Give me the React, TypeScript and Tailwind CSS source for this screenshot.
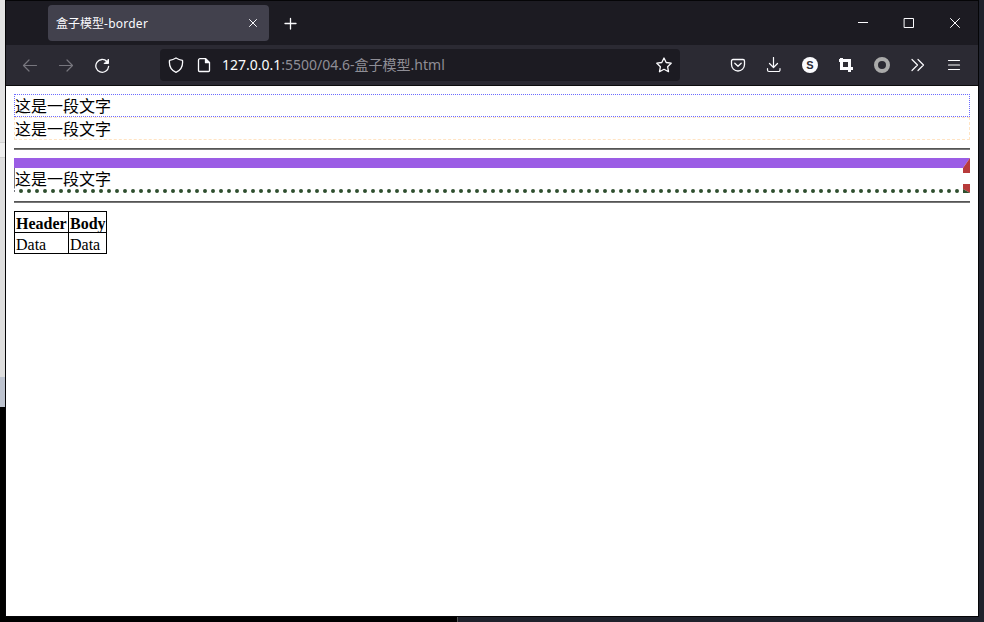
import React from "react";

const ui = "font-['Noto_Sans','Noto_Sans_CJK_SC',sans-serif]";

function Ico({ children, w = 16, c = "#fbfbfe", sw = 1.2 }: { children: React.ReactNode; w?: number; c?: string; sw?: number }) {
  return (
    <svg width={w} height={w} viewBox={`0 0 ${w} ${w}`} fill="none" stroke={c} strokeWidth={sw} strokeLinecap="round" strokeLinejoin="round" className="block shrink-0">
      {children}
    </svg>
  );
}

function TitleBar() {
  return (
    <div className="flex h-11 bg-[#1c1b22]">
      <div className="ml-[42px] mt-1 flex h-9 w-[221px] items-center rounded bg-[#42414d] pl-2 pr-2 text-[12px] text-[#fbfbfe]">
        <span className="flex-1 whitespace-nowrap pt-px">盒子模型<span className="tracking-[0.25px]">-border</span></span>
        <Ico sw={1}><path d="M4.500 4.500l7 7M11.500 4.500l-7 7" /></Ico>
      </div>
      <div className="ml-[14px] mt-[15px]"><Ico sw={1.3}><path d="M7.500 2.500v10.500M2 7.500h11" /></Ico></div>
      <div className="ml-auto mr-[15px] mt-[14px] flex gap-[30px]">
        <Ico sw={1}><path d="M3 7.500h10" strokeLinecap="butt" /></Ico>
        <Ico sw={1}><path d="M3.500 3.500h9v9h-9z" /></Ico>
        <Ico sw={1}><path d="M3.500 3.500l9 9M12.500 3.500l-9 9" /></Ico>
      </div>
    </div>
  );
}

function Toolbar() {
  return (
    <div className="flex h-10 items-center bg-[#2b2a33]">
      <div className="ml-4 flex gap-5">
        <Ico c="#77767e"><path d="M14.500 8.500H1.500M7 3L1.500 8.500L7 14" /></Ico>
        <Ico c="#77767e"><path d="M1.500 8.500h13M9 3l5.500 5.500L9 14" /></Ico>
        <Ico sw={1.3}><path d="M13 4.600A6.400 6.400 0 1 0 14.600 9.500" /><path d="M14.500 2.500v4H10.500z" fill="#fbfbfe" strokeWidth="1" /></Ico>
      </div>
      <div className="ml-[50px] flex h-8 w-[520px] items-center rounded bg-[#1c1b22] px-2">
        <Ico sw={1.3}><path d="M8 1C6 2.300 4 3 1.500 3.300C1 8 2.500 13 8 15.300C13.500 13 15 8 14.500 3.300C12 3 10 2.300 8 1z" /></Ico>
        <div className="ml-3"><Ico sw={1.3}><path d="M9.500 1.700h-5.500a1.500 1.500 0 0 0-1.500 1.500v10.300a1 1 0 0 0 1 1h9a1 1 0 0 0 1-1V5.700z" /><path d="M9.500 1.700v4h4z" fill="#fbfbfe" /></Ico></div>
        <div className="ml-[10px] flex-1 whitespace-nowrap pb-0.5 text-[14px] text-[#8f8e96]"><span className="text-[#fbfbfe]">127.0.0.1</span>:5500/04.6-盒子模型.html</div>
        <Ico sw={1.3}><path d="M8 1l2.200 4.500l5 .7l-3.600 3.500l.9 5L8 12.300l-4.500 2.400l.9-5L.8 6.200l5-.7z" /></Ico>
      </div>
      <div className="ml-auto mr-4 flex gap-5">
        <Ico sw={1.3}><path d="M3 2.500h10a1.500 1.500 0 0 1 1.500 1.500v3.500a6.500 6.500 0 0 1-13 0V4A1.500 1.500 0 0 1 3 2.500zM4.800 6.300L8 9.300l3.200-3" /></Ico>
        <Ico sw={1.2}><path d="M7.500 .5v10M3.500 6.500L7.500 10.500L11.500 6.500M1.500 11.500v1.500a1.500 1.500 0 0 0 1.500 1.500h9.500a1.500 1.500 0 0 0 1.500-1.500v-1.500" /></Ico>
        <div className="flex size-4 items-center justify-center rounded-full bg-[#fbfbfe] font-['Liberation_Sans',sans-serif] text-[11px] font-bold leading-none text-[#2b2a33]">S</div>
        <Ico sw={3}><path d="M3.500 1v10.500h11.500M1 3.500h10.500v11.500" strokeLinecap="butt" strokeLinejoin="miter" /></Ico>
        <div className="size-4 rounded-full border-[4px] border-[#aaa] bg-[#2b2a33]" />
        <Ico sw={1.2}><path d="M2 2.500l5.500 5.500l-5.500 5.500M8 2.500l5.500 5.500l-5.500 5.500" /></Ico>
        <Ico sw={1.2}><path d="M2.500 3.500h11M2.500 8h11M2.500 12.500h11" /></Ico>
      </div>
    </div>
  );
}

function MixedBorderBox() {
  return (
    <div className="relative mt-2 h-9 pl-px pt-[11px] leading-[21px]">
      <svg width="956" height="36" viewBox="0 0 956 36" className="absolute inset-0 block">
        <path d="M0.500 1v29.500M0.500 32v2" stroke="#77777f" />
        <path d="M0 0H956L949 10H0z" fill="#9b5de5" />
        <path d="M956 0V15H949V10z" fill="#b83b3b" />
        <path d="M949 26h7v9l-7-4z" fill="#b83b3b" />
        <path d="M949 31l7 4h-7z" fill="#2f4f2f" />
        <line x1="7" x2="945" y1="33" y2="33" stroke="#2f4f2f" strokeWidth="4" strokeDasharray="0 8" strokeLinecap="round" />
      </svg>
      这是一段文字
    </div>
  );
}

export default function App() {
  return (
    <div className={`flex h-[622px] w-[984px] overflow-hidden bg-[#1f222c] ${ui}`}>
      <div className="flex w-[5px] shrink-0 flex-col bg-black">
        <div className="h-[142px] bg-[#e3e3e3]" />
        <div className="h-4 border-y border-[#d0d0d0] bg-[#eee]" />
        <div className="h-[219px] bg-[#dedede]" />
        <div className="h-[30px] bg-[#bdc3cf]" />
      </div>
      <div className="flex w-[974px] shrink-0 flex-col">
        <div className="flex h-[617px] flex-col border border-[#050507] bg-white">
          <TitleBar />
          <Toolbar />
          <div className="h-px bg-[#0c0c0d]" />
          <main className="flex flex-col px-2 pt-2 font-['Liberation_Serif','Noto_Sans_CJK_SC',serif] text-[16px] text-black">
            <div className="h-[23px] border border-dotted border-[#6c6cff] pt-px leading-[21px]">这是一段文字</div>
            <div className="h-[23px] border border-dashed border-[#ffe4c4] pt-px leading-[21px]">这是一段文字</div>
            <hr className="mt-2 h-0.5 border-0 border-t border-[#555] bg-[#777]" />
            <MixedBorderBox />
            <hr className="mt-[7px] h-0.5 border-0 border-t border-[#555] bg-[#777]" />
            <table className="mt-2 w-[93px] table-fixed border-collapse leading-[17px]">
              <colgroup><col className="w-[54px]" /><col className="w-[38px]" /></colgroup>
              <tbody>
                <tr className="h-[21px]"><th className="border border-black px-px pb-0 pt-[3px] text-left">Header</th><th className="border border-black px-px pb-0 pt-[3px] text-left">Body</th></tr>
                <tr className="h-[21px]"><td className="border border-black px-px pb-0 pt-[3px]">Data</td><td className="border border-black px-px pb-0 pt-[3px]">Data</td></tr>
              </tbody>
            </table>
          </main>
        </div>
        <div className="h-[5px] w-[453px] border-r border-[#555] bg-black" />
      </div>
    </div>
  );
}
